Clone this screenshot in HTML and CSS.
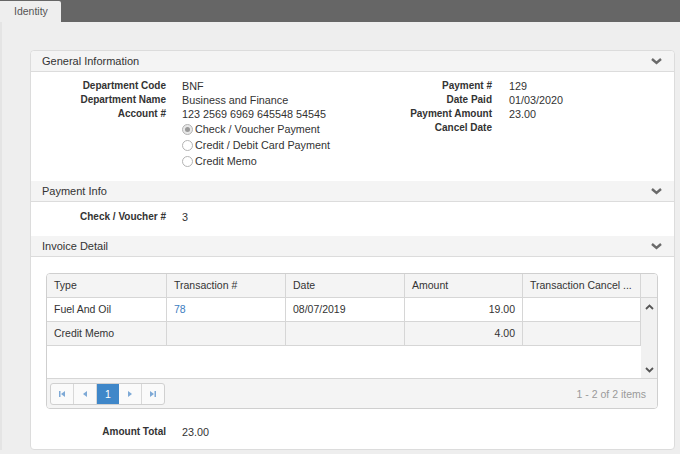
FILE: index.html
```html
<!DOCTYPE html>
<html lang="en">
<head>
    <meta charset="UTF-8">
    <title>Identity</title>
    <link rel="stylesheet" href="styles.css">
</head>
<body>
    <div class="topbar">
        <div class="tab">Identity</div>
    </div>

    <div class="content">
        <div class="panel">
            <!-- General Information -->
            <div class="panel-head">
                <span>General Information</span>
                <svg class="chev" width="11" height="7" viewBox="0 0 11 7"><polyline points="1,1 5.5,5 10,1" /></svg>
            </div>
            <div class="panel-body general">
                <div class="fields left">
                    <div class="lbl">Department Code</div><div class="val">BNF</div>
                    <div class="lbl">Department Name</div><div class="val">Business and Finance</div>
                    <div class="lbl">Account #</div><div class="val">123 2569 6969 645548 54545</div>
                    <div class="lbl"></div>
                    <div class="radios">
                        <div class="radio-row"><span class="radio checked"></span>Check / Voucher Payment</div>
                        <div class="radio-row"><span class="radio"></span>Credit / Debit Card Payment</div>
                        <div class="radio-row"><span class="radio"></span>Credit Memo</div>
                    </div>
                </div>
                <div class="fields right">
                    <div class="lbl">Payment #</div><div class="val">129</div>
                    <div class="lbl">Date Paid</div><div class="val">01/03/2020</div>
                    <div class="lbl">Payment Amount</div><div class="val">23.00</div>
                    <div class="lbl">Cancel Date</div><div class="val"></div>
                </div>
            </div>

            <!-- Payment Info -->
            <div class="panel-head">
                <span>Payment Info</span>
                <svg class="chev" width="11" height="7" viewBox="0 0 11 7"><polyline points="1,1 5.5,5 10,1" /></svg>
            </div>
            <div class="panel-body">
                <div class="fields left">
                    <div class="lbl">Check / Voucher #</div><div class="val">3</div>
                </div>
            </div>

            <!-- Invoice Detail -->
            <div class="panel-head">
                <span>Invoice Detail</span>
                <svg class="chev" width="11" height="7" viewBox="0 0 11 7"><polyline points="1,1 5.5,5 10,1" /></svg>
            </div>
            <div class="panel-body invoice">
                <div class="grid">
                    <div class="row head">
                        <div class="cell c1">Type</div>
                        <div class="cell c2">Transaction #</div>
                        <div class="cell c3">Date</div>
                        <div class="cell c4">Amount</div>
                        <div class="cell c5">Transaction Cancel ...</div>
                        <div class="cell sb"></div>
                    </div>
                    <div class="grid-body">
                        <div class="rows">
                            <div class="row">
                                <div class="cell c1">Fuel And Oil</div>
                                <div class="cell c2"><a href="#">78</a></div>
                                <div class="cell c3">08/07/2019</div>
                                <div class="cell c4 num">19.00</div>
                                <div class="cell c5"></div>
                            </div>
                            <div class="row alt">
                                <div class="cell c1">Credit Memo</div>
                                <div class="cell c2"></div>
                                <div class="cell c3"></div>
                                <div class="cell c4 num">4.00</div>
                                <div class="cell c5"></div>
                            </div>
                        </div>
                        <div class="scroll">
                            <svg width="9" height="6" viewBox="0 0 9 6"><polyline points="1,5 4.5,1.5 8,5" /></svg>
                            <svg width="9" height="6" viewBox="0 0 9 6"><polyline points="1,1 4.5,4.5 8,1" /></svg>
                        </div>
                    </div>
                    <div class="pager">
                        <div class="pages">
                            <span class="pbtn"><svg width="8" height="8" viewBox="0 0 8 8"><rect x="1" y="1" width="1.5" height="6" /><polygon points="7,1 7,7 3,4" /></svg></span>
                            <span class="pbtn"><svg width="8" height="8" viewBox="0 0 8 8"><polygon points="6,1 6,7 2,4" /></svg></span>
                            <span class="pbtn current">1</span>
                            <span class="pbtn"><svg width="8" height="8" viewBox="0 0 8 8"><polygon points="2,1 2,7 6,4" /></svg></span>
                            <span class="pbtn"><svg width="8" height="8" viewBox="0 0 8 8"><polygon points="1,1 1,7 5,4" /><rect x="5.5" y="1" width="1.5" height="6" /></svg></span>
                        </div>
                        <span class="pinfo">1 - 2 of 2 items</span>
                    </div>
                </div>

                <div class="fields left total">
                    <div class="lbl">Amount Total</div><div class="val">23.00</div>
                </div>
            </div>
        </div>
    </div>
</body>
</html>
```

FILE: styles.css
```css
/* page base */
html, body {
    margin: 0;
    background: #eeeeee;
    font-family: "Liberation Sans", Arial, sans-serif;
    color: #333;
}

/* top tab strip */
.topbar {
    height: 22px;
    background: #666666;
}

.tab {
    display: inline-block;
    margin-top: 1px;
    width: 47px;
    height: 21px;
    line-height: 21px;
    padding-left: 14px;
    font-size: 10.5px;
    color: #555;
    background: #eeeeee;
    border-top-right-radius: 2px;
}

.content {
    padding: 28px 5px 0 28px;
    border-left: 2px solid #e4e4e4;
}

/* panel and its sections */
.panel {
    background: #fff;
    border: 1px solid #dcdcdc;
    border-radius: 4px;
}

.panel-head {
    display: flex;
    justify-content: space-between;
    align-items: center;
    height: 20px;
    padding: 0 12px 0 11px;
    background: #f4f4f4;
    border-bottom: 1px solid #dcdcdc;
    font-size: 11px;
    color: #333;
}

.panel-head:first-child {
    border-radius: 4px 4px 0 0;
}

.chev polyline {
    fill: none;
    stroke: #6a6a6a;
    stroke-width: 2.4;
}

.panel-body {
    padding: 8px 0 12px 0;
}

.panel-body.general {
    display: flex;
    padding-top: 7px;
}

.panel-body.invoice {
    padding: 16px 16px 10px 15px;
}

/* label / value rows */
.fields {
    display: grid;
    align-items: center;
    align-content: start;
}

.fields.left {
    width: 330px;
    grid-template-columns: 135px 1fr;
    column-gap: 16px;
}

.fields.right {
    grid-template-columns: 131px 1fr;
    column-gap: 17px;
}

.lbl {
    text-align: right;
    font-weight: bold;
    font-size: 10px;
    line-height: 14px;
    height: 14px;
    align-self: start;
}

.val {
    font-size: 10.8px;
    line-height: 14px;
    height: 14px;
}

.radios {
    align-self: start;
}

.radio-row {
    display: flex;
    align-items: center;
    height: 16px;
    font-size: 10.8px;
}

.radio {
    box-sizing: border-box;
    width: 11px;
    height: 11px;
    margin-right: 2px;
    border: 1px solid #b4b4b4;
    border-radius: 50%;
    background: #fff;
    position: relative;
}

.radio.checked {
    background: #e8e8e8;
}

.radio.checked::after {
    content: "";
    position: absolute;
    left: 2px;
    top: 2px;
    width: 5px;
    height: 5px;
    border-radius: 50%;
    background: #999;
}

/* invoice grid */
.grid {
    border: 1px solid #cfcfcf;
    border-radius: 4px;
    font-size: 10.5px;
    overflow: hidden;
}

.row {
    display: flex;
    box-sizing: border-box;
    height: 24px;
    border-bottom: 1px solid #d6d6d6;
}

.row.head {
    background: #f4f4f4;
}

.row.alt {
    background: #f4f4f4;
}

.cell {
    box-sizing: border-box;
    padding: 0 7px;
    line-height: 23px;
    border-right: 1px solid #d6d6d6;
    white-space: nowrap;
    overflow: hidden;
}

.c1 { width: 120px; }
.c2 { width: 119px; }
.c3 { width: 119px; }
.c4 { width: 118px; }
.c5 { width: 118px; }
.sb { width: 16px; border-right: none; }

.num {
    text-align: right;
}

.cell a {
    color: #3c7dbf;
    text-decoration: none;
}

.grid-body {
    display: flex;
    height: 80px;
}

.rows {
    width: 594px;
}

.scroll {
    width: 16px;
    background: #f1f1f1;
    display: flex;
    flex-direction: column;
    justify-content: space-between;
    align-items: center;
    padding: 6px 0 5px;
    box-sizing: border-box;
}

.scroll polyline {
    fill: none;
    stroke: #555;
    stroke-width: 1.8;
}

.pager {
    display: flex;
    justify-content: space-between;
    align-items: center;
    height: 29px;
    padding: 0 11px 0 3px;
    background: #f4f4f4;
    border-top: 1px solid #d6d6d6;
}

.pages {
    display: flex;
    border: 1px solid #d0d0d0;
    border-radius: 3px;
    background: #fafafa;
    overflow: hidden;
}

.pbtn {
    display: flex;
    align-items: center;
    justify-content: center;
    width: 22px;
    height: 20px;
    border-right: 1px solid #d8d8d8;
    font-size: 10.5px;
}

.pbtn:last-child {
    border-right: none;
}

.pbtn svg {
    fill: #7ea9d6;
}

.pbtn.current {
    background: #3f87c9;
    color: #fff;
    border-right: none;
}

.pinfo {
    color: #9a9a9a;
    font-size: 10.5px;
}

.fields.total {
    margin-top: 16px;
    margin-left: -15px;
}
```
